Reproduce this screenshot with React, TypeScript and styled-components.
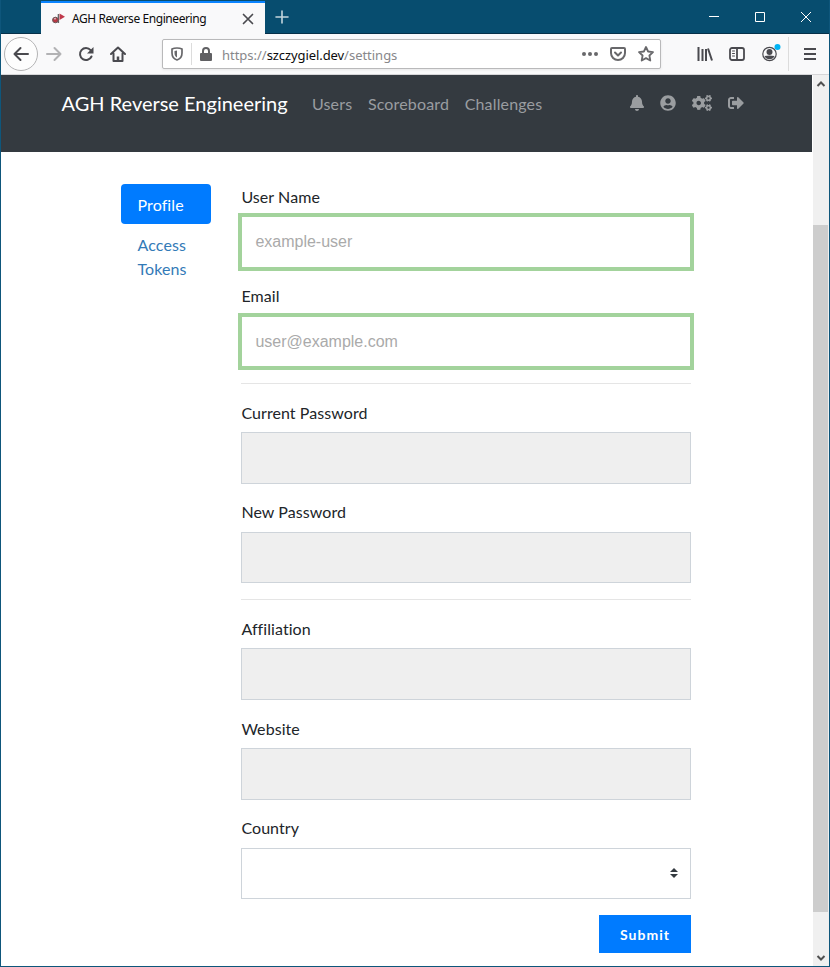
import React from 'react';
import styled, { createGlobalStyle } from 'styled-components';
import { FaBell, FaUserCircle, FaCogs, FaSignOutAlt } from 'react-icons/fa';

const GlobalStyle = createGlobalStyle`
  *, *::before, *::after { box-sizing: border-box; }
  body { margin: 0; background: #fff; overflow: hidden; }
`;

const Window = styled.div`
  width: 830px;
  height: 967px;
  display: flex;
  flex-direction: column;
  border: 1px solid #0e567b;
  border-top: 0;
  background: #fff;
  font-family: Lato, sans-serif;
  font-size: 16px;
  line-height: 24px;
  color: #212529;
  overflow: hidden;
`;

const TitleBar = styled.div`
  height: 34px;
  flex: none;
  display: flex;
  background: #074d6f;
  border-bottom: 1px solid #063049;
  margin: 0 -1px;
  padding-left: 41px;
`;

const Tab = styled.div`
  width: 224px;
  height: 34px;
  margin-top: 1px;
  display: flex;
  align-items: center;
  padding: 0 11px 0 10px;
  border-top: 2px solid #0a84ff;
  background: #f9f9fa;
`;

const TabTitle = styled.span`
  width: 170px;
  margin-left: 5px;
  font: 12px/16px 'Noto Sans', sans-serif;
  letter-spacing: -0.43px;
  color: #0c0c0d;
  white-space: nowrap;
`;

const NewTab = styled.div`
  width: 34px;
  display: grid;
  place-items: center;
`;

const WindowControls = styled.div`
  margin: 0 1px 0 auto;
  display: flex;
`;

const Control = styled.div`
  width: 46px;
  height: 34px;
  display: grid;
  place-items: center;
`;

const Toolbar = styled.div`
  height: 41px;
  flex: none;
  display: flex;
  align-items: center;
  background: #f9f9fa;
  border-bottom: 1px solid #d6d6d8;
`;

const BackButton = styled.div`
  width: 34px;
  height: 34px;
  flex: none;
  margin-left: 3px;
  border: 1px solid #b4b4b5;
  border-radius: 50%;
  display: grid;
  place-items: center;
  background: #fdfdfd;
`;

const ToolButton = styled.div<{ $w?: number }>`
  width: ${p => p.$w ?? 32}px;
  height: 32px;
  flex: none;
  display: grid;
  place-items: center;
`;

const AddressBar = styled.div`
  width: 499px;
  height: 30px;
  flex: none;
  margin-left: 28px;
  display: flex;
  align-items: center;
  background: #fff;
  border: 1px solid #b9b9ba;
  border-radius: 2px;
  box-shadow: 0 1px 3px rgba(0, 0, 0, 0.08);
`;

const Divider = styled.div<{ $h: number }>`
  width: 1px;
  height: ${p => p.$h}px;
  background: #dcdcdc;
`;

const Url = styled.span`
  flex: 1;
  margin-left: 3px;
  padding-top: 2px;
  font: 13px/18px 'Noto Sans', sans-serif;
  letter-spacing: -0.02px;
  color: #87878a;
  white-space: nowrap;
`;

const Domain = styled.span`
  color: #0c0c0d;
  letter-spacing: -0.08px;
`;

const Tools = styled.div`
  flex: none;
  margin-left: 28px;
  display: flex;
  align-items: center;
`;

const Viewport = styled.div`
  flex: 1;
  min-height: 0;
  display: flex;
`;

const Page = styled.div`
  width: 811px;
  flex: none;
`;

const Navbar = styled.nav`
  height: 77px;
  padding: 8px 68.5px 0 60.5px;
  display: flex;
  align-items: flex-start;
  background: #343a40;
  color: #9a9da0;
`;

const Brand = styled.span`
  width: 226px;
  margin-right: 24.5px;
  font-size: 20px;
  line-height: 40px;
  color: #fff;
  white-space: nowrap;
`;

const NavLinks = styled.div`
  display: flex;
  gap: 15.7px;
  line-height: 41px;
  letter-spacing: 0.15px;
`;

const NavIcons = styled.div`
  height: 40px;
  margin-left: auto;
  display: flex;
  align-items: center;
  gap: 15.6px;
  font-size: 16px;
`;

const Content = styled.div`
  display: flex;
  padding: 32px 0 0 120px;
`;

const Pills = styled.div`
  width: 90px;
  margin-right: 30px;
`;

const Pill = styled.div<{ $active?: boolean }>`
  padding: 9px 16.5px 7px;
  border-radius: 4px;
  letter-spacing: 0.1px;
  color: ${p => (p.$active ? '#fff' : '#337ab7')};
  background: ${p => (p.$active ? '#007bff' : 'transparent')};
`;

const Form = styled.form`
  width: 450px;
`;

const Group = styled.div`
  margin-bottom: 16px;
`;

const Label = styled.label`
  display: block;
  height: 24px;
  padding-left: 0.4px;
  margin: -0.4px 0 8.4px;
  line-height: 25px;
  letter-spacing: 0.07px;
`;

const Input = styled.input<{ $valid?: boolean }>`
  display: block;
  width: 450px;
  height: 51.6px;
  padding: 0.4px 13.4px 0;
  border: 1px solid ${p => (p.$valid ? '#a3d39c' : '#ced4da')};
  border-radius: 0;
  outline: 0;
  background: ${p => (p.$valid ? '#fff' : '#efefef')};
  box-shadow: ${p => (p.$valid ? '0 0 0 3px #a3d39c' : 'none')};
  font: 16px 'Liberation Sans', sans-serif;

  &::placeholder {
    color: #aaa;
    opacity: 1;
  }
`;

const Select = styled.div`
  height: 51.6px;
  padding-right: 12px;
  display: flex;
  align-items: center;
  justify-content: flex-end;
  border: 1px solid #ced4da;
`;

const Rule = styled.hr`
  height: 1px;
  margin: 16px 0;
  border: 0;
  background: #e5e5e5;
`;

const Submit = styled.button`
  display: block;
  width: 92px;
  height: 38px;
  margin-left: auto;
  padding: 1.5px 0 0;
  border: 0;
  background: #007bff;
  color: #fff;
  font: bold 14px Lato, sans-serif;
  letter-spacing: 1.05px;
`;

const Scrollbar = styled.div`
  width: 17px;
  height: 100%;
  display: flex;
  flex-direction: column;
  align-items: center;
  border-left: 1px solid #fff;
  background: #f0f0f0;
`;

const ScrollArrow = styled.div`
  height: 17px;
  display: grid;
  place-items: center;
`;

const Thumb = styled.div`
  width: 15px;
  height: 687px;
  margin: 133px 1px auto 0;
  background: #cdcdcd;
`;

const Stroke = ({ d, size = 16, width = 2, color = '#4a4a4f', children }: {
  d?: string; size?: number; width?: number; color?: string; children?: React.ReactNode;
}) => (
  <svg width={size} height={size} viewBox={`0 0 ${size} ${size}`} fill="none" stroke={color}
    strokeWidth={width} strokeLinecap="round" strokeLinejoin="round">
    {d && <path d={d} />}
    {children}
  </svg>
);

const fields = ['Current Password', 'New Password'];
const details = ['Affiliation', 'Website'];

const Field = ({ label, placeholder }: { label: string; placeholder?: string }) => (
  <Group>
    <Label>{label}</Label>
    <Input $valid={!!placeholder} placeholder={placeholder} />
  </Group>
);

export default function App() {
  return (
    <Window>
      <GlobalStyle />
      <TitleBar>
        <Tab>
          <svg width="16" height="16" viewBox="0 0 16 16">
            <path d="M7.4 3v9" stroke="#666" strokeWidth="1.4" />
            <circle cx="4.4" cy="9" r="2.8" fill="#b93743" stroke="#6b5557" strokeWidth="1" />
            <path d="M3 7.8h2" stroke="#ddd" />
            <path d="M8.5 2.5l5.5 3.3-5.5 3.3z" fill="#c0394b" />
          </svg>
          <TabTitle>AGH Reverse Engineering</TabTitle>
          <Stroke size={12} width={1.7} d="M1.5 1.5l9 9M10.5 1.5l-9 9" />
        </Tab>
        <NewTab><Stroke size={14} width={1.6} color="#c3d5dd" d="M7 1v12M1 7h12" /></NewTab>
        <WindowControls>
          <Control><svg width="10" height="10"><path d="M0 4.5h10" stroke="#fff" /></svg></Control>
          <Control><svg width="10" height="10"><path d="M.5.5h9v9h-9z" fill="none" stroke="#fff" /></svg></Control>
          <Control><svg width="10" height="10"><path d="M0 0l10 10M10 0L0 10" stroke="#fff" /></svg></Control>
        </WindowControls>
      </TitleBar>

      <Toolbar>
        <BackButton><Stroke d="M15 8H1.5M7.5 2l-6 6 6 6" /></BackButton>
        <ToolButton><Stroke color="#b2b2b4" d="M1 8h13.5M8.5 2l6 6-6 6" /></ToolButton>
        <ToolButton>
          <Stroke d="M12.6 4.2A6 6 0 1 0 13.5 10.5"><path d="M15.5 1v6.5H9z" fill="#4a4a4f" stroke="none" /></Stroke>
        </ToolButton>
        <ToolButton>
          <Stroke d="M1 8l7-6.5L15 8M3.5 7.5V15h9V7.5">
            <path d="M8 14v-3.5" strokeWidth="2.5" strokeLinecap="butt" />
          </Stroke>
        </ToolButton>
        <AddressBar>
          <ToolButton $w={28}>
            <Stroke size={14} width={1.7} color="#68686b" d="M7 1c2 0 4 .5 5 1v4c0 4-2 6-5 7-3-1-5-3-5-7V2c1-.5 3-1 5-1z">
              <path d="M7 3.5v7C5.3 9.5 4.5 8 4.5 6V4z" fill="#68686b" stroke="none" />
            </Stroke>
          </ToolButton>
          <Divider $h={22} />
          <ToolButton $w={27}>
            <Stroke size={14} color="#606063" d="M4 6V4a3 3 0 0 1 6 0v2"><rect x="2" y="7" width="10" height="6" fill="#606063" /></Stroke>
          </ToolButton>
          <Url>https://<Domain>szczygiel.dev</Domain>/settings</Url>
          <ToolButton $w={28}>
            <svg width="16" height="6" fill="#68686b"><circle cx="2" cy="3" r="2" /><circle cx="8" cy="3" r="2" /><circle cx="14" cy="3" r="2" /></svg>
          </ToolButton>
          <ToolButton $w={28}><Stroke color="#68686b" d="M2 2h12a1 1 0 0 1 1 1v4a7 7 0 0 1-14 0V3a1 1 0 0 1 1-1zM5 6.5l3 3 3-3" /></ToolButton>
          <ToolButton $w={28}><Stroke width={1.8} color="#68686b" d="M8 1l2.1 4.5 4.9.6-3.6 3.4.9 5L8 12.1l-4.3 2.4.9-5L1 6.1l4.9-.6z" /></ToolButton>
        </AddressBar>
        <Tools>
          <ToolButton>
            <svg width="16" height="14" stroke="#4a4a4f" strokeWidth="2"><path d="M1.5 0v14M5.5 2v12M9 2v12M11 1.5l4 12" /></svg>
          </ToolButton>
          <ToolButton>
            <Stroke width={1.8} d="M3 2h10a2 2 0 0 1 2 2v8a2 2 0 0 1-2 2H3a2 2 0 0 1-2-2V4a2 2 0 0 1 2-2zM8 2v12"><path d="M3.5 5h2M3.5 7.5h2M3.5 10h2" strokeWidth="1" /></Stroke>
          </ToolButton>
          <ToolButton $w={35}>
            <svg width="22" height="22" viewBox="0 0 22 22">
              <circle cx="9.5" cy="11" r="6.7" fill="none" stroke="#4a4a4f" strokeWidth="1.2" />
              <circle cx="9.5" cy="9" r="3" fill="#4a4a4f" />
              <path d="M4.5 13q5-1 10 0a5.5 5.5 0 0 1-10 0z" fill="#4a4a4f" />
              <circle cx="17.5" cy="4" r="3" fill="#00b3f4" />
            </svg>
          </ToolButton>
          <Divider $h={34} />
          <ToolButton $w={42}>
            <svg width="12" height="12" stroke="#4a4a4f" strokeWidth="2"><path d="M0 1h12M0 6h12M0 11h12" /></svg>
          </ToolButton>
        </Tools>
      </Toolbar>

      <Viewport>
        <Page>
          <Navbar>
            <Brand>AGH Reverse Engineering</Brand>
            <NavLinks>
              <span>Users</span>
              <span>Scoreboard</span>
              <span>Challenges</span>
            </NavLinks>
            <NavIcons>
              <FaBell />
              <FaUserCircle />
              <FaCogs size={20} />
              <FaSignOutAlt />
            </NavIcons>
          </Navbar>
          <Content>
            <Pills>
              <Pill $active>Profile</Pill>
              <Pill>Access Tokens</Pill>
            </Pills>
            <Form>
              <Field label="User Name" placeholder="example-user" />
              <Field label="Email" placeholder="user@example.com" />
              <Rule />
              {fields.map(f => <Field key={f} label={f} />)}
              <Rule />
              {details.map(f => <Field key={f} label={f} />)}
              <Group>
                <Label>Country</Label>
                <Select>
                  <svg width="8" height="10" viewBox="0 0 4 5"><path d="M2 0L0 2h4zm0 5L0 3h4z" fill="#343a40" /></svg>
                </Select>
              </Group>
              <Submit type="button">Submit</Submit>
            </Form>
          </Content>
        </Page>
        <Scrollbar>
          <ScrollArrow><svg width="10" height="6"><path d="M1.5 5L5 1.5 8.5 5" fill="none" stroke="#505050" strokeWidth="2" /></svg></ScrollArrow>
          <Thumb />
          <ScrollArrow><svg width="10" height="6"><path d="M1.5 1L5 4.5 8.5 1" fill="none" stroke="#505050" strokeWidth="2" /></svg></ScrollArrow>
        </Scrollbar>
      </Viewport>
    </Window>
  );
}
